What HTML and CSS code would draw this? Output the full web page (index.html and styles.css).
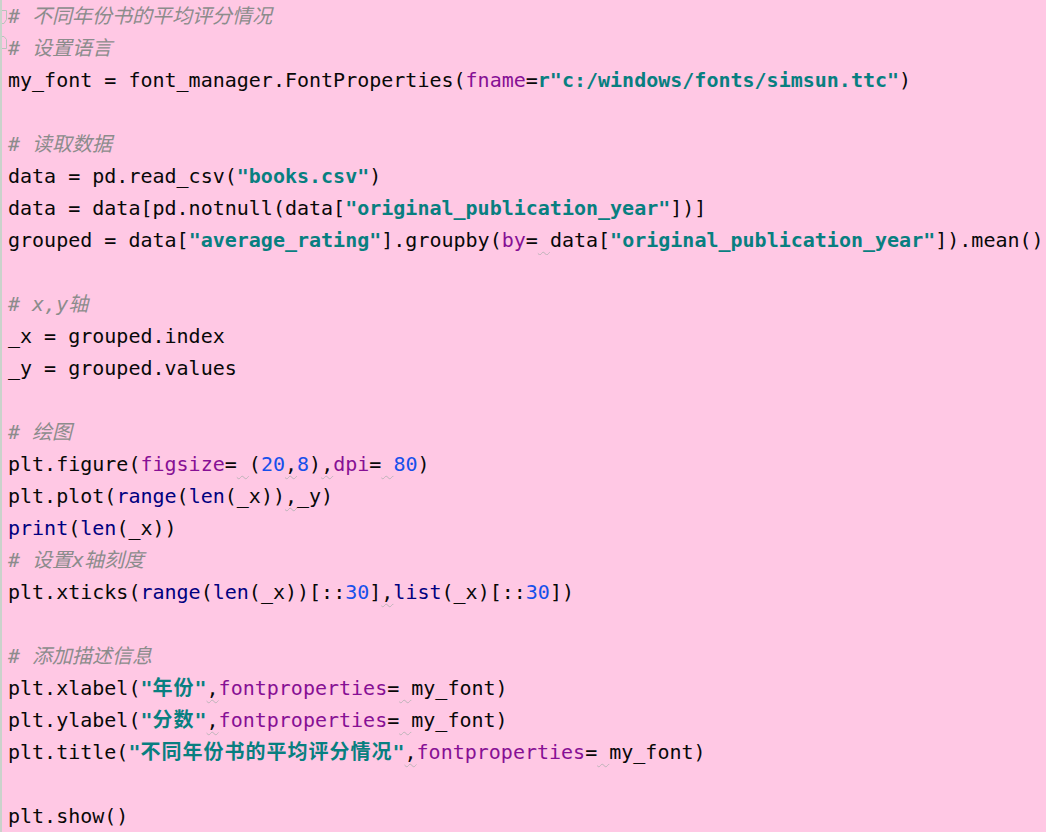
FILE: index.html
```html
<!DOCTYPE html>
<html lang="zh">
<head>
<meta charset="utf-8">
<title>code</title>
<link rel="stylesheet" href="styles.css">
</head>
<body>
<div class="editor">
  <svg class="fold f1" width="8" height="16" viewBox="0 0 8 16"><path d="M0 1.5H4.5V10.5L2 14.5H0" fill="none" stroke="#b8c4bc" stroke-width="1"/></svg>
  <svg class="fold f2" width="8" height="16" viewBox="0 0 8 16"><path d="M0 13.5H4.5V4.5L2 1.5H0" fill="none" stroke="#b8c4bc" stroke-width="1"/></svg>
  <pre class="code"><span class="c"># 不同年份书的平均评分情况</span>
<span class="c"># 设置语言</span>
my_font = font_manager.FontProperties(<span class="k">fname</span>=<span class="s">r"c:/windows/fonts/simsun.ttc"</span>)

<span class="c"># 读取数据</span>
data = pd.read_csv(<span class="s">"books.csv"</span>)
data = data[pd.notnull(data[<span class="s">"original_publication_year"</span>])]
grouped = data[<span class="s">"average_rating"</span>].groupby(<span class="k">by</span>=<span class="w"> </span>data[<span class="s">"original_publication_year"</span>]).mean()

<span class="c"># x,y轴</span>
_x = grouped.index
_y = grouped.values

<span class="c"># 绘图</span>
plt.figure(<span class="k">figsize</span>=<span class="w"> </span>(<span class="n">20</span><span class="w">,</span><span class="n">8</span>)<span class="w">,</span><span class="k">dpi</span>=<span class="w"> </span><span class="n">80</span>)
plt.plot(<span class="b">range</span>(<span class="b">len</span>(_x))<span class="w">,</span>_y)
<span class="b">print</span>(<span class="b">len</span>(_x))
<span class="c"># 设置x轴刻度</span>
plt.xticks(<span class="b">range</span>(<span class="b">len</span>(_x))[::<span class="n">30</span>]<span class="w">,</span><span class="b">list</span>(_x)[::<span class="n">30</span>])

<span class="c"># 添加描述信息</span>
plt.xlabel(<span class="s">"<span class="cjk">年份</span>"</span><span class="w">,</span><span class="k">fontproperties</span>=<span class="w"> </span>my_font)
plt.ylabel(<span class="s">"<span class="cjk">分数</span>"</span><span class="w">,</span><span class="k">fontproperties</span>=<span class="w"> </span>my_font)
plt.title(<span class="s">"<span class="cjk">不同年份书的平均评分情况</span>"</span><span class="w">,</span><span class="k">fontproperties</span>=<span class="w"> </span>my_font)

plt.show()</pre>
</div>
</body>
</html>
```
FILE: styles.css
```css
html, body {
  margin: 0;
  padding: 0;
  background: #ffc8e4;
}
.editor {
  position: relative;
  width: 1046px;
  height: 832px;
  background: #ffc8e4;
  border-left: 2px solid #c9d3cb;
  box-sizing: border-box;
  overflow: hidden;
}
.fold {
  position: absolute;
  left: 0;
}
.f1 { top: 9px; }
.f2 { top: 35px; }
.code {
  margin: 0;
  padding: 0 0 0 6px;
  font-family: "DejaVu Sans Mono", "Noto Sans CJK SC", monospace;
  font-size: 20px;
  line-height: 32px;
  color: #080808;
  white-space: pre;
}
.c {
  color: #8c8c8c;
  font-style: italic;
}
.s {
  color: #087f80;
  font-weight: bold;
}
.cjk {
  letter-spacing: 1px;
}
.k { color: #871094; }
.n { color: #1750eb; }
.b { color: #000080; }
.w {
  text-decoration: underline wavy #bdb3b8;
  text-decoration-thickness: 1px;
  text-underline-offset: 4px;
}
```
